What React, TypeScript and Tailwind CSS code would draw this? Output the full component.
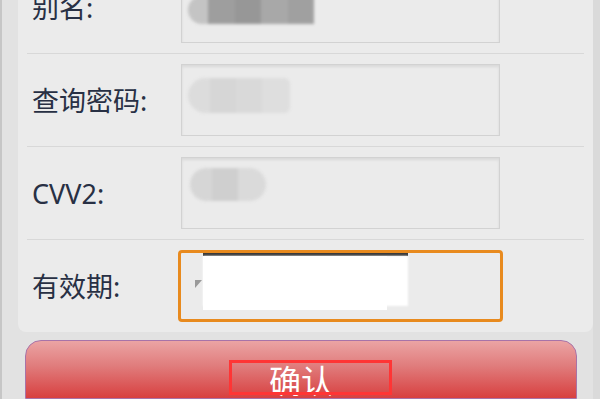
import React from "react";

const font = { fontFamily: '"Noto Sans", "Noto Sans CJK SC", sans-serif' };

function Box({ children }: { children?: React.ReactNode }) {
  return (
    <div className="relative w-[319px] h-[72px] border border-[#d2d2d2] bg-[#ebebeb] shadow-[inset_0_2px_3px_rgba(0,0,0,0.08)] overflow-hidden">
      {children}
    </div>
  );
}

function Row({ label, children }: { label: string; children: React.ReactNode }) {
  return (
    <div className="flex items-center h-[92px] pl-[14px]">
      <div className="w-[149px] text-[27px] leading-none text-[#283044]" style={font}>
        {label}
      </div>
      {children}
    </div>
  );
}

function Sep() {
  return <div className="mx-[9px] h-px bg-[#d8d8d8]" />;
}

export default function App() {
  return (
    <div className="w-[600px] h-[399px] overflow-hidden flex bg-[#e2e2e2] border-l-2 border-[#c6c6c6]">
      <div className="flex flex-col pl-[16px] w-[591px]">
        <div className="-mt-[39px] w-[575px] bg-[#ebebeb] rounded-b-[8px]">
          <Row label="别名:">
            <Box>
              <div className="absolute left-[6px] top-[24px] w-[132px] h-[28px] flex blur-[1.5px]">
                <div className="w-[20px] h-full rounded-l-full bg-[#c4c4c4]" />
                <div className="w-[27px] h-full bg-[#9e9e9e]" />
                <div className="w-[26px] h-full bg-[#979797]" />
                <div className="w-[27px] h-full bg-[#a8a8a8]" />
                <div className="w-[26px] h-full bg-[#a0a0a0]" />
              </div>
            </Box>
          </Row>
          <Sep />
          <Row label="查询密码:">
            <Box>
              <div className="absolute left-[6px] top-[13px] w-[102px] h-[35px] flex blur-[1.5px]">
                <div className="w-[22px] h-full rounded-l-full bg-[#dcdcdc]" />
                <div className="w-[26px] h-full bg-[#d6d6d6]" />
                <div className="w-[26px] h-full bg-[#d9d9d9]" />
                <div className="w-[28px] h-full rounded-r-[6px] bg-[#dedede]" />
              </div>
            </Box>
          </Row>
          <Sep />
          <Row label="CVV2:">
            <Box>
              <div className="absolute left-[8px] top-[10px] w-[76px] h-[33px] flex blur-[1.5px]">
                <div className="w-[22px] h-full rounded-l-full bg-[#d6d6d6]" />
                <div className="w-[26px] h-full bg-[#cfcfcf]" />
                <div className="w-[28px] h-full rounded-r-full bg-[#dadada]" />
              </div>
            </Box>
          </Row>
          <Sep />
          <Row label="有效期:">
            <div className="relative -ml-[3px] w-[325px] h-[72px] rounded-[4px] border-[3px] border-[#e88a1e] bg-[#ebebeb] overflow-hidden">
              <div className="absolute left-[22px] top-0 w-[205px] h-[3px] bg-[#3a3a3a]" />
              <div className="absolute left-[22px] top-[3px] w-[184px] h-[54px] bg-white" />
              <div className="absolute left-[22px] top-[3px] w-[205px] h-[50px] bg-white blur-[1px]" />
              <div className="absolute left-[14px] top-[27px] w-0 h-0 border-l-[7px] border-l-[#9a9a9a] border-b-[8px] border-b-transparent" />
            </div>
          </Row>
        </div>
        <div className="relative mt-[8px] ml-[7px] w-[552px] h-[80px] rounded-t-[16px] border border-[#a873a8] bg-[linear-gradient(to_bottom,#eba4a4,#e07c7c_25px,#d73a3a_60px)]">
          <div
            className="pt-[24px] text-center text-[32px] leading-none text-white"
            style={font}
          >
            确认
          </div>
          <div className="absolute left-[203px] top-[19px] w-[163px] h-[35px] border-[3px] border-[#ff3535]" />
        </div>
      </div>
      <div className="w-[7px] h-full bg-[#dadada]" />
    </div>
  );
}
